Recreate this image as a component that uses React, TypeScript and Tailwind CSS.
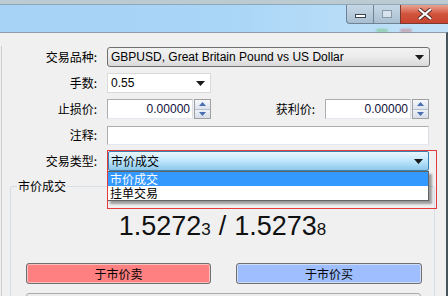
import React from 'react'

const cjk = '"Noto Sans CJK SC", "Noto Sans", sans-serif'
const latin = '"Liberation Sans", "Noto Sans CJK SC", sans-serif'

function Arrow() {
  return (
    <svg width="9" height="5" viewBox="0 0 9 5" className="shrink-0">
      <path d="M0 0h9L4.5 5z" fill="#1a1a1a" />
    </svg>
  )
}

function Spin({ value }: { value: string }) {
  return (
    <div className="flex h-[20px] w-[104px] items-stretch">
      <div className="flex w-[86px] items-center justify-end border border-[#abadb3] border-b-[#e3e9ef] border-r-[#dbdfe6] bg-white pr-[2px] text-[12px] text-[#10103a]" style={{ fontFamily: latin }}>
        {value}
      </div>
      <div className="ml-[1px] flex w-[17px] flex-col border border-[#a0a0a0] bg-[#e8ecf2]">
        <div className="flex flex-1 items-center justify-center border-b border-[#b8c0cc] bg-gradient-to-b from-[#f6f8fb] to-[#dde4ee]">
          <svg width="7" height="4" viewBox="0 0 7 4"><path d="M3.5 0L7 4H0z" fill="#4a6fb0" /></svg>
        </div>
        <div className="flex flex-1 items-center justify-center bg-gradient-to-b from-[#eef2f7] to-[#d6dee9]">
          <svg width="7" height="4" viewBox="0 0 7 4"><path d="M0 0h7L3.5 4z" fill="#4a6fb0" /></svg>
        </div>
      </div>
    </div>
  )
}

function Label({ children, w = 97 }: { children: React.ReactNode; w?: number }) {
  return (
    <div className={`${w === 97 ? 'w-[97px]' : 'w-[104px]'} shrink-0 text-right text-[12px] leading-[20px] text-black`} style={{ fontFamily: cjk }}>
      {children}
    </div>
  )
}

export default function App() {
  return (
    <div className="relative h-[296px] w-[448px] overflow-hidden bg-[#f0f0f0]" style={{ fontFamily: cjk }}>
      {/* title bar */}
      <div className="h-[4px] bg-[#bccad2]" />
      <div className="relative h-[28px] border-t border-[#8fa8b8] bg-gradient-to-r from-[#a6d3f5] via-[#a9d6f7] to-[#c3e2f8]">
        <div className="absolute right-0 top-0 flex h-[19px]">
          <div className="flex w-[27px] items-center justify-center rounded-bl-[4px] border-b border-l border-[#6f8394] bg-gradient-to-b from-[#c6d8e6] to-[#a9bfd2]">
            <div className="mt-[4px] h-[4px] w-[11px] border border-[#3a4650] bg-white" />
          </div>
          <div className="flex w-[27px] items-center justify-center border-b border-l border-[#6f8394] bg-gradient-to-b from-[#c6d8e6] to-[#a9bfd2]">
            <div className="h-[8px] w-[10px] border border-[#8899a8] bg-[#d7e2ec]" />
          </div>
          <div className="flex w-[48px] items-center justify-center border-b border-l border-[#7a3a30] bg-gradient-to-b from-[#e8a393] via-[#d2533c] to-[#c8452f]">
            <svg width="16" height="12" viewBox="0 0 16 12">
              <path d="M2 1l6 5 6-5M2 11l6-5 6 5" stroke="#4a2a22" strokeWidth="4" fill="none" />
              <path d="M2 1l6 5 6-5M2 11l6-5 6 5" stroke="#ffffff" strokeWidth="2.2" fill="none" />
            </svg>
          </div>
        </div>
        <div className="absolute bottom-[0px] right-[60px] h-[3px] w-[12px] rounded-full bg-[#6cc070] opacity-60 blur-[1px]" />
        <div className="absolute bottom-[0px] right-[36px] h-[3px] w-[12px] rounded-full bg-[#d06060] opacity-50 blur-[1px]" />
      </div>

      {/* body */}
      <div className="relative h-[264px] border-t border-[#8d9ca8] border-r-[2px] border-r-[#46555c]">
        <div className="absolute left-[1px] top-[13px] h-[260px] w-[1px] bg-[#c9cdd2]" />
        <div className="flex flex-col gap-[6px] pt-[14px]">
          {/* symbol */}
          <div className="flex items-center">
            <Label>交易品种:</Label>
            <div className="ml-[10px] flex h-[20px] w-[323px] items-center justify-between rounded-[3px] border border-[#707070] bg-gradient-to-b from-[#f2f2f2] via-[#ebebeb] to-[#d9d9d9] pl-[3px] pr-[5px] text-[12px] text-black" style={{ fontFamily: latin }}>
              <span>GBPUSD, Great Britain Pound vs US Dollar</span>
              <Arrow />
            </div>
          </div>
          {/* lots */}
          <div className="flex items-center">
            <Label>手数:</Label>
            <div className="ml-[10px] flex h-[20px] w-[104px] items-center justify-between border border-[#dadada] bg-white pl-[3px] pr-[5px] text-[12px] text-black" style={{ fontFamily: latin }}>
              <span>0.55</span>
              <Arrow />
            </div>
          </div>
          {/* sl / tp */}
          <div className="flex items-center">
            <Label>止损价:</Label>
            <div className="ml-[10px]"><Spin value="0.00000" /></div>
            <Label w={104}>获利价:</Label>
            <div className="ml-[10px]"><Spin value="0.00000" /></div>
          </div>
          {/* comment */}
          <div className="flex items-center">
            <Label>注释:</Label>
            <div className="ml-[10px] h-[19px] w-[322px] border border-[#abadb3] border-b-[#e3e9ef] border-r-[#dbdfe6] bg-white" />
          </div>
          {/* trade type */}
          <div className="relative flex items-center">
            <Label>交易类型:</Label>
            <div className="ml-[11px] flex h-[20px] w-[321px] items-center justify-between rounded-[2px] border border-[#3c7fb1] bg-gradient-to-b from-[#eaf6fd] via-[#bee6fd] to-[#8cc8ea] pl-[2px] pr-[5px] text-[12px] text-black">
              <span>市价成交</span>
              <Arrow />
            </div>
            <div className="absolute left-[107px] top-[20px] z-10 w-[322px] border border-[#646464] bg-white text-[12px] leading-[14px] shadow-[3px_3px_2px_rgba(0,0,0,0.35)]">
              <div className="bg-[#3399ff] pl-[2px] text-white">市价成交</div>
              <div className="pl-[2px] text-black">挂单交易</div>
            </div>
          </div>
        </div>

        {/* market group */}
        <div className="relative mx-[10px] mt-[15px] h-[120px] w-[425px] rounded-t-[3px] border border-[#d5dfe5] border-b-0">
          <div className="absolute -top-[8px] left-[6px] bg-[#f0f0f0] px-[1px] text-[12px] leading-[14px] text-black">市价成交</div>
          <div className="mt-[26px] flex items-baseline justify-center text-[27px] leading-[27px] text-[#111]" style={{ fontFamily: latin }}>
            <span>1.5272</span>
            <span className="text-[17px]">3</span>
            <span className="mx-[8px]">/</span>
            <span>1.5273</span>
            <span className="text-[17px]">8</span>
          </div>
          <div className="mt-[20px] flex gap-[25px] pl-[15px]">
            <div className="flex h-[21px] w-[185px] items-center justify-center rounded-[3px] border border-[#707070] bg-[#ff8080] text-[12px] text-black shadow-[inset_0_0_0_1px_#f4c0c0]">于市价卖</div>
            <div className="flex h-[21px] w-[186px] items-center justify-center rounded-[3px] border border-[#707070] bg-[#9ebeff] text-[12px] text-black shadow-[inset_0_0_0_1px_#cfdcf8]">于市价买</div>
          </div>
          <div className="ml-[15px] mt-[9px] h-[10px] w-[395px] rounded-t-[3px] border border-[#acacac] bg-[#ededed]" />
        </div>
      </div>

      {/* highlight outline */}
      <div className="pointer-events-none absolute left-[107px] top-[150px] z-20 h-[59px] w-[330px] border border-[#e33a3a]" />
    </div>
  )
}
